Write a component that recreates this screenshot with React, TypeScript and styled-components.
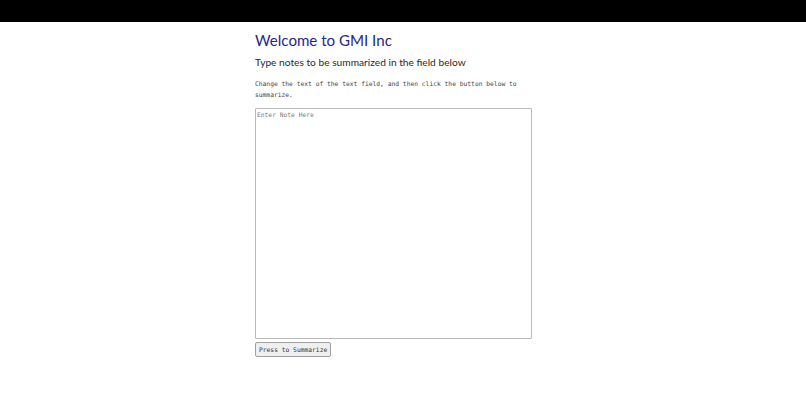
import React, { useState } from 'react';
import styled, { createGlobalStyle } from 'styled-components';

const GlobalStyle = createGlobalStyle`
  html, body {
    margin: 0;
    padding: 0;
    background: #ffffff;
  }
`;

const TopBar = styled.header`
  height: 22px;
  background-color: #000000;
`;

const Main = styled.main`
  width: 277px;
  margin-left: calc(50% - 148px);
  padding-top: 9px;
  display: flex;
  flex-direction: column;
`;

const Title = styled.h1`
  margin: 0;
  font-family: Lato, 'Open Sans', sans-serif;
  font-weight: 400;
  font-size: 15.1px;
  line-height: 18px;
  color: #27278a;
`;

const Subtitle = styled.h2`
  margin: 7px 0 0;
  font-family: Lato, 'Open Sans', sans-serif;
  font-weight: 400;
  font-size: 10.2px;
  line-height: 13px;
  color: #2a2a2a;
`;

const Help = styled.p`
  margin: 9px 0 8px;
  font-family: 'DejaVu Sans Mono', monospace;
  font-size: 6.3px;
  line-height: 11px;
  color: #444444;
`;

const NoteField = styled.textarea`
  box-sizing: border-box;
  width: 277px;
  height: 231px;
  margin: 0;
  padding: 1px;
  resize: none;
  border: 1px solid #b8b8b8;
  border-radius: 1px;
  font-family: 'DejaVu Sans Mono', monospace;
  font-size: 6.3px;
  line-height: 9px;
  color: #333333;
  outline: none;

  &::placeholder {
    color: #7a7a7a;
  }
`;

const SummarizeButton = styled.button`
  align-self: flex-start;
  box-sizing: border-box;
  height: 15px;
  margin-top: 3px;
  padding: 0 3px;
  font-family: 'DejaVu Sans Mono', monospace;
  font-size: 6.3px;
  color: #333333;
  background: #efefef;
  border: 1px solid #a0a0a0;
  border-radius: 2px;
  cursor: pointer;
`;

export default function App() {
  const [note, setNote] = useState('');

  return (
    <>
      <GlobalStyle />
      <TopBar />
      <Main>
        <Title>Welcome to GMI Inc</Title>
        <Subtitle>Type notes to be summarized in the field below</Subtitle>
        <Help>
          Change the text of the text field, and then click the button below to summarize.
        </Help>
        <NoteField
          placeholder="Enter Note Here"
          value={note}
          onChange={(e) => setNote(e.target.value)}
        />
        <SummarizeButton>Press to Summarize</SummarizeButton>
      </Main>
    </>
  );
}
